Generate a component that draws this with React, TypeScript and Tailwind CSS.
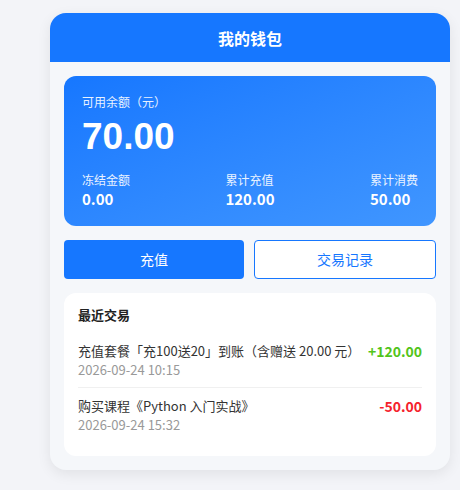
import React from "react";

const font = {
  fontFamily:
    '"Noto Sans CJK SC", "Noto Sans", "Liberation Sans", sans-serif',
};

export default function App() {
  return (
    <div
      className="min-h-screen bg-[#f3f4f8] pl-[50px] pr-[10px] pt-[13px]"
      style={font}
    >
      <div className="w-[400px] rounded-2xl bg-[#f5f7fa] overflow-hidden shadow-[0_4px_14px_rgba(0,0,0,0.08)]">
        {/* Header */}
        <div className="h-[49px] bg-[#1677ff] flex items-center justify-center">
          <h1 className="text-white text-[16px] font-bold">我的钱包</h1>
        </div>

        <div className="p-[14px] flex flex-col gap-[14px]">
          {/* Balance */}
          <div className="rounded-xl bg-gradient-to-br from-[#1677ff] to-[#4096ff] text-white px-[18px] pt-[17px] pb-[17px]">
            <p className="text-[12px] leading-[18px] opacity-90">可用余额（元）</p>
            <p
              className="text-[37px] leading-[44px] font-bold mt-[4px] mb-[12px]"
              style={{ fontFamily: '"Liberation Sans", Arial, sans-serif' }}
            >
              70.00
            </p>
            <div className="flex justify-between">
              <Stat label="冻结金额" value="0.00" />
              <Stat label="累计充值" value="120.00" />
              <Stat label="累计消费" value="50.00" />
            </div>
          </div>

          {/* Buttons */}
          <div className="flex gap-[10px]">
            <button className="flex-1 h-[39px] rounded bg-[#1677ff] text-white text-[14px]">
              充值
            </button>
            <button className="flex-1 h-[39px] rounded bg-white border border-[#1677ff] text-[#1677ff] text-[14px]">
              交易记录
            </button>
          </div>

          {/* Recent */}
          <div className="rounded-xl bg-white px-[14px] pt-[12px] pb-[14px]">
            <h3 className="text-[13px] font-bold text-[#222] leading-[20px] mb-[8px]">
              最近交易
            </h3>
            <Tx
              title="充值套餐「充100送20」到账（含赠送 20.00 元）"
              time="2026-09-24 10:15"
              amount="+120.00"
              color="text-[#52c41a]"
            />
            <div className="h-px bg-[#f0f0f0]" />
            <Tx
              title="购买课程《Python 入门实战》"
              time="2026-09-24 15:32"
              amount="-50.00"
              color="text-[#f5222d]"
            />
          </div>
        </div>
      </div>
    </div>
  );
}

function Stat({ label, value }: { label: string; value: string }) {
  return (
    <div>
      <p className="text-[12px] leading-[18px] opacity-90">{label}</p>
      <p className="text-[15px] leading-[20px] font-bold">{value}</p>
    </div>
  );
}

function Tx({
  title,
  time,
  amount,
  color,
}: {
  title: string;
  time: string;
  amount: string;
  color: string;
}) {
  return (
    <div className="flex justify-between items-start py-[8px]">
      <div>
        <p className="text-[13px] leading-[20px] text-[#333]">{title}</p>
        <p className="text-[13px] leading-[18px] text-[#999]">{time}</p>
      </div>
      <span className={`text-[14px] leading-[20px] font-bold ${color}`}>
        {amount}
      </span>
    </div>
  );
}
